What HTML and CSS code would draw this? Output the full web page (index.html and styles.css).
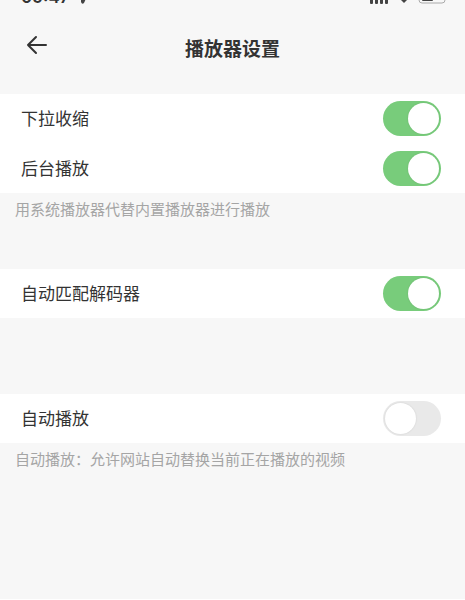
FILE: index.html
```html
<!DOCTYPE html>
<html lang="zh-CN">
<head>
<meta charset="utf-8">
<meta name="viewport" content="width=device-width, initial-scale=1">
<title>播放器设置</title>
<link rel="stylesheet" href="styles.css">
</head>
<body>
<div class="status">
  <div class="status-side">
    <span class="time">09:47</span>
    <svg width="12" height="12" viewBox="0 0 12 12" aria-hidden="true"><path d="M0 5 11 0 6 11Q4 13 3 10V6Z"/></svg>
  </div>
  <div class="status-side">
    <svg width="78" height="13" viewBox="0 0 78 13" aria-hidden="true">
      <g><rect x="1" y="8" width="3" height="5" rx="1"/><rect x="6" y="6" width="3" height="7" rx="1"/><rect x="11" y="3" width="3" height="10" rx="1"/><rect x="16" y="0" width="3" height="13" rx="1"/></g>
      <path d="M35 12 27 4Q35-2 43 4Z"/>
      <rect class="battery" x="50" y="0" width="26" height="12" rx="3"/>
      <rect x="53" y="2" width="11" height="8" rx="1"/>
    </svg>
  </div>
</div>
<header class="header">
  <button class="back" type="button" aria-label="返回">
    <svg width="22" height="20" viewBox="0 0 22 20" aria-hidden="true"><path d="M20 10H2M10 2 2 10 10 18"/></svg>
  </button>
  <h1>播放器设置</h1>
</header>
<main>
  <section>
    <div class="card">
      <label class="row"><span>下拉收缩</span><input class="switch" type="checkbox" role="switch" checked></label>
      <label class="row"><span>后台播放</span><input class="switch" type="checkbox" role="switch" checked></label>
    </div>
    <p class="note">用系统播放器代替内置播放器进行播放</p>
  </section>
  <section>
    <div class="card">
      <label class="row"><span>自动匹配解码器</span><input class="switch" type="checkbox" role="switch" checked></label>
    </div>
  </section>
  <section>
    <div class="card">
      <label class="row"><span>自动播放</span><input class="switch" type="checkbox" role="switch"></label>
    </div>
    <p class="note">自动播放：允许网站自动替换当前正在播放的视频</p>
  </section>
</main>
</body>
</html>
```
FILE: styles.css
```css
* {
  box-sizing: border-box;
}

body {
  margin: 0;
  min-height: 100vh;
  background: #f7f7f7;
  border-bottom: 1px solid #fff;
  color: #333;
  font-family: "Noto Sans CJK SC", sans-serif;
}

/* Only the lower edge of the status bar stays in view. */
.status {
  display: flex;
  justify-content: space-between;
  align-items: flex-end;
  height: 4px;
  padding: 0 18px 0 21px;
  overflow: hidden;
  fill: #444;
}

.status-side {
  display: flex;
  align-items: flex-end;
  gap: 8px;
}

.time {
  height: 16px;
  font: 600 17px/18px "Inter", sans-serif;
}

.battery {
  fill: none;
  stroke: #aaa;
}

.header {
  display: grid;
  grid-template-columns: 48px 1fr 48px;
  align-items: center;
  height: 90px;
  padding: 0 8px 2px;
}

.back {
  display: flex;
  justify-content: center;
  align-items: center;
  height: 48px;
  margin: 0;
  padding: 0 0 6px 10px;
  border: 0;
  background: none;
}

.back svg {
  fill: none;
  stroke: #333;
  stroke-width: 2;
  stroke-linecap: round;
  stroke-linejoin: round;
}

h1 {
  margin: 0;
  font-size: 19px;
  line-height: 28px;
  text-align: center;
}

.card {
  display: grid;
  gap: 1px;
  background: #fff;
}

.row {
  display: flex;
  justify-content: space-between;
  align-items: center;
  height: 49px;
  padding: 0 24px 0 21px;
  font-size: 17px;
  line-height: 24px;
}

.row span {
  padding-bottom: 2px;
}

section + section {
  padding-top: 76px;
}

.note {
  height: 32px;
  margin: 0 0 -32px;
  padding: 0 15px;
  color: #a5a5a5;
  font-size: 15px;
  line-height: 32px;
}

.switch {
  display: flex;
  align-items: center;
  appearance: none;
  width: 58px;
  height: 35px;
  margin: 0;
  padding: 2px;
  border-radius: 18px;
  background: #e9e9e9;
}

.switch::before {
  content: "";
  width: 31px;
  height: 31px;
  border-radius: 50%;
  background: #fff;
  box-shadow: 0 0 2px rgba(0, 0, 0, 0.12);
}

.switch:checked {
  justify-content: flex-end;
  background: #78cc7b;
}
```
